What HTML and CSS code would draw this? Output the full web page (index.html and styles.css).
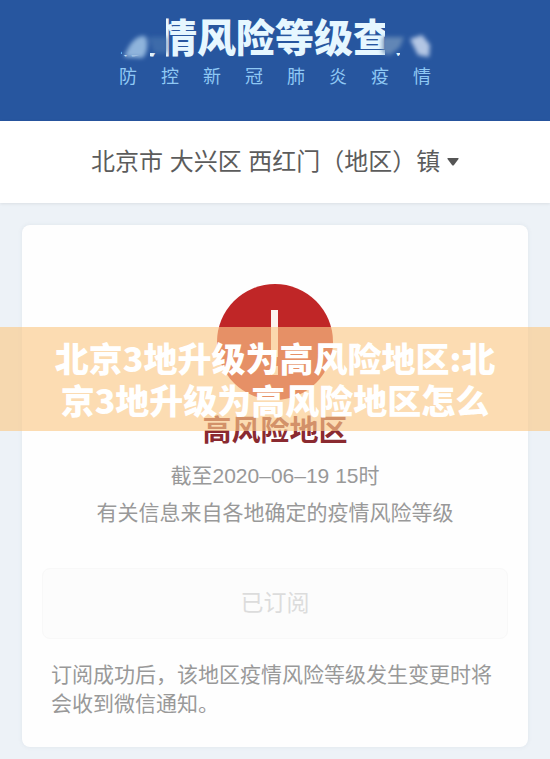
FILE: index.html
```
<!DOCTYPE html>
<html lang="zh-CN">
<head>
    <meta charset="UTF-8">
    <meta name="viewport" content="width=device-width, initial-scale=1.0">
    <title>疫情风险等级查询</title>
    <link rel="stylesheet" href="styles.css">
</head>
<body>
    <header class="header">
        <div class="title-wrap">
            <h1 class="title">疫情风险等级查询</h1>
            <svg class="smudge" viewBox="0 0 330 56" aria-hidden="true">
                <defs>
                    <filter id="soft" x="-30%" y="-30%" width="160%" height="160%">
                        <feGaussianBlur stdDeviation="2"/>
                    </filter>
                </defs>
                <path fill="#27569f" d="M0 0H56V47H50V42H40V49H32V44H12V38H0Z"/>
                <path fill="#27569f" d="M275 0H330V44H316V49H290V42H284V47H275Z"/>
                <g filter="url(#soft)">
                    <path fill="#8fb4dc" d="M14 46C18 36 24 24 35 25C40 32 36 46 32 47Z"/>
                    <path fill="#4d78b0" opacity=".6" d="M38 26H58V42H44Z"/>
                    <path fill="#6f92bb" opacity=".8" d="M272 26L294 26L290 36L280 44L272 42Z"/>
                    <path fill="#b3c6e4" d="M300 28L312 24L320 34L319 46L308 44Z"/>
                </g>
            </svg>
        </div>
        <p class="subtitle">
            <span>防</span><span>控</span><span>新</span><span>冠</span><span>肺</span><span>炎</span><span>疫</span><span>情</span>
        </p>
    </header>

    <div class="location">
        <select class="location-select" aria-label="地区">
            <option>北京市 大兴区 西红门（地区）镇</option>
        </select>
        <svg class="caret" viewBox="0 0 12 8" aria-hidden="true">
            <path d="M1 0H11Q12 0 11.500 1L7 7Q6 8 5 7L.5 1Q0 0 1 0Z"/>
        </svg>
    </div>

    <main class="main">
        <section class="card">
            <svg class="risk-icon" viewBox="0 0 116 116" aria-hidden="true">
                <circle cx="58" cy="58" r="58" fill="#c02627"/>
                <path fill="#fdf3ef" d="M54 26H61V73H54ZM54 82H61V91H54Z"/>
            </svg>
            <h2 class="risk-level">高风险地区</h2>
            <p class="info">截至2020–06–19 15时</p>
            <p class="info">有关信息来自各地确定的疫情风险等级</p>
            <button type="button" class="subscribe">已订阅</button>
            <p class="note">订阅成功后，该地区疫情风险等级发生变更时将会收到微信通知。</p>
        </section>
    </main>

    <div class="banner">北京3地升级为高风险地区:北京3地升级为高风险地区怎么</div>
</body>
</html>
```

FILE: styles.css
```
* {
    box-sizing: border-box;
}
body {
    margin: 0;
    position: relative;
    font-family: "Liberation Sans", "Noto Sans CJK SC", sans-serif;
    background-color: #edf2f7;
}
h1, h2, p {
    margin: 0;
}
.header {
    display: flex;
    flex-direction: column;
    align-items: center;
    gap: 4px;
    padding: 17px 0 32px;
    background-color: #27569f;
}
.title-wrap {
    position: relative;
}
.title {
    font-size: 39px;
    line-height: 44px;
    font-weight: 900;
    color: #e6f7ff;
    white-space: nowrap;
}
/* faded first and last characters */
.smudge {
    position: absolute;
    top: -6px;
    left: -9px;
    width: 330px;
    height: 56px;
}
.subtitle {
    display: flex;
    gap: 24px;
    font-size: 18px;
    line-height: 24px;
    color: #8fc8f4;
}
.location {
    display: flex;
    justify-content: center;
    align-items: center;
    gap: 6px;
    padding: 24px 0;
    background-color: #fff;
    box-shadow: 0 1px 3px rgba(0,0,0,0.08);
}
.location-select {
    appearance: none;
    border: none;
    padding: 0;
    background: none;
    font-family: inherit;
    font-size: 24px;
    line-height: 34px;
    height: 34px;
    color: #5c5c5c;
}
.caret {
    width: 12px;
    height: 8px;
    fill: #555;
}
.main {
    padding: 22px 22px 11px;
}
.card {
    display: flex;
    flex-direction: column;
    align-items: center;
    padding: 59px 20px 29px;
    background-color: #fefefe;
    border-radius: 8px;
    box-shadow: 0 0 4px rgba(120,140,160,0.12);
}
.risk-icon {
    width: 116px;
    height: 116px;
}
.risk-level {
    margin: 13px 0 8px;
    font-size: 29px;
    line-height: 36px;
    font-weight: bold;
    color: #8a2a30;
}
.info {
    font-size: 21px;
    line-height: 37px;
    color: #999;
}
.subscribe {
    width: 100%;
    height: 71px;
    margin: 37px 0 21px;
    padding: 0 0 5px;
    border: 1px solid #f8f8f8;
    border-radius: 8px;
    background-color: #fcfcfc;
    font-family: inherit;
    font-size: 23px;
    color: #dcdcdc;
}
.note {
    width: 100%;
    padding: 0 9px;
    font-size: 21px;
    line-height: 29px;
    color: #999;
}
.banner {
    position: absolute;
    top: 327px;
    left: 0;
    right: 0;
    padding: 10px 45px;
    background-color: rgba(250,201,137,0.65);
    font-family: "Noto Sans CJK SC", sans-serif;
    font-size: 34px;
    line-height: 42px;
    font-weight: 900;
    text-align: center;
    color: #fff;
}
```
